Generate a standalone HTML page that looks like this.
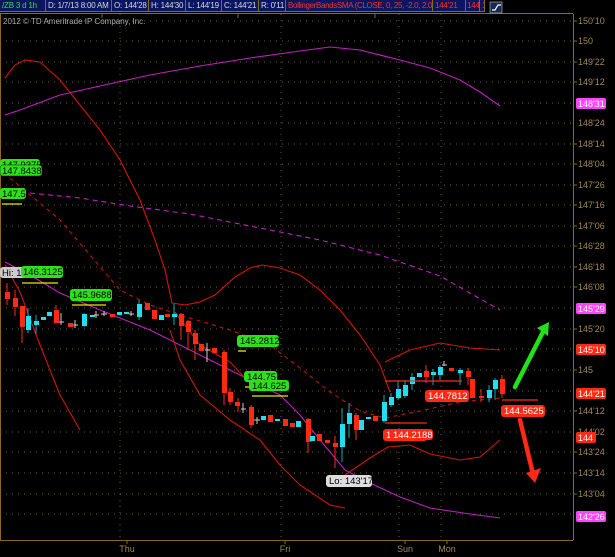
<!DOCTYPE html>
<html><head><meta charset="utf-8"><style>
html,body{margin:0;padding:0;background:#000;width:615px;height:557px;overflow:hidden;font-family:"Liberation Sans",sans-serif}
.hd{position:absolute;top:0;left:0;height:13px;width:615px;background:#000}
.c{position:absolute;top:0;height:12px;background:#0b1660;border-right:1px solid #8a6a18;border-bottom:1px solid #8a6a18;color:#d8d8d8;font-size:8px;letter-spacing:-0.2px;line-height:12px;white-space:nowrap;overflow:hidden;padding-left:2px;box-sizing:border-box}
</style></head><body>
<div class="hd">
<div class="c" style="left:0;width:46px;color:#2fe03a">/ZB 3 d 1h</div>
<div class="c" style="left:46px;width:66px">D: 1/7/13 8:00 AM</div>
<div class="c" style="left:112px;width:37px">O: 144'28</div>
<div class="c" style="left:149px;width:37px">H: 144'30</div>
<div class="c" style="left:186px;width:36px">L: 144'19</div>
<div class="c" style="left:222px;width:37px">C: 144'21</div>
<div class="c" style="left:259px;width:27px">R: 0'11</div>
<div class="c" style="left:286px;width:147px;color:#ff3020;letter-spacing:-0.35px">BollingerBandsSMA (CLOSE, 0, 25, -2.0, 2.0)</div>
<div class="c" style="left:433px;width:33px;color:#ff3020">144'21</div>
<div class="c" style="left:466px;width:14px;color:#ff3020;padding-left:1px">144</div>
<div class="c" style="left:480px;width:5px;color:#ff3020">1</div>
</div>
<svg width="615" height="557" style="position:absolute;top:0;left:0" font-family="Liberation Sans, sans-serif">
<line x1="0" y1="13.5" x2="573" y2="13.5" stroke="#8a6a18"/>
<rect x="490" y="2" width="12" height="11" fill="#1a2a50" stroke="#aaa" stroke-width="0.7"/>
<path d="M492 10 L495 10 L498 5 L501 5" stroke="#fff" fill="none" stroke-width="1.2"/>
<g stroke="#8a6a18"><line x1="102" y1="14" x2="102" y2="18"/><line x1="238" y1="14" x2="238" y2="18"/><line x1="375" y1="14" x2="375" y2="18"/></g>
<text x="3" y="24" fill="#b0b0b0" font-size="8">2012 © TD Ameritrade IP Company, Inc.</text>
<g stroke="#6a5a30" stroke-dasharray="1 5" stroke-width="1">
<line x1="0" y1="21" x2="573" y2="21"/><line x1="0" y1="41" x2="573" y2="41"/><line x1="0" y1="62" x2="573" y2="62"/><line x1="0" y1="82" x2="573" y2="82"/><line x1="0" y1="103" x2="573" y2="103"/><line x1="0" y1="123" x2="573" y2="123"/><line x1="0" y1="144" x2="573" y2="144"/><line x1="0" y1="164" x2="573" y2="164"/><line x1="0" y1="185" x2="573" y2="185"/><line x1="0" y1="205" x2="573" y2="205"/><line x1="0" y1="226" x2="573" y2="226"/><line x1="0" y1="246" x2="573" y2="246"/><line x1="0" y1="267" x2="573" y2="267"/><line x1="0" y1="287" x2="573" y2="287"/><line x1="0" y1="308" x2="573" y2="308"/><line x1="0" y1="329" x2="573" y2="329"/><line x1="0" y1="349" x2="573" y2="349"/><line x1="0" y1="370" x2="573" y2="370"/><line x1="0" y1="391" x2="573" y2="391"/><line x1="0" y1="411" x2="573" y2="411"/><line x1="0" y1="432" x2="573" y2="432"/><line x1="0" y1="452" x2="573" y2="452"/><line x1="0" y1="473" x2="573" y2="473"/><line x1="0" y1="494" x2="573" y2="494"/><line x1="0" y1="514" x2="573" y2="514"/>
<line x1="120" y1="14" x2="120" y2="540"/><line x1="281" y1="14" x2="281" y2="540"/><line x1="399" y1="14" x2="399" y2="540"/><line x1="441" y1="14" x2="441" y2="540"/>
</g>
<line x1="573.5" y1="14" x2="573.5" y2="540" stroke="#8a6a18"/>
<line x1="0" y1="540.5" x2="573" y2="540.5" stroke="#8a6a18"/>
<line x1="0.5" y1="14" x2="0.5" y2="540" stroke="#8a6a18"/>
<g stroke="#8a6a18"><line x1="127" y1="540" x2="127" y2="544"/><line x1="285" y1="540" x2="285" y2="544"/><line x1="405" y1="540" x2="405" y2="544"/><line x1="447" y1="540" x2="447" y2="544"/></g>
<g fill="#a08850" font-size="9" text-anchor="middle"><text x="127" y="552">Thu</text><text x="285" y="552">Fri</text><text x="405" y="552">Sun</text><text x="447" y="552">Mon</text></g>
<g fill="#a08850" font-size="9">
<g stroke="#8a6a18"><line x1="573" y1="21" x2="577" y2="21"/><line x1="573" y1="41" x2="577" y2="41"/><line x1="573" y1="62" x2="577" y2="62"/><line x1="573" y1="82" x2="577" y2="82"/><line x1="573" y1="144" x2="577" y2="144"/><line x1="573" y1="164" x2="577" y2="164"/><line x1="573" y1="185" x2="577" y2="185"/><line x1="573" y1="205" x2="577" y2="205"/><line x1="573" y1="226" x2="577" y2="226"/><line x1="573" y1="246" x2="577" y2="246"/><line x1="573" y1="267" x2="577" y2="267"/><line x1="573" y1="287" x2="577" y2="287"/><line x1="573" y1="329" x2="577" y2="329"/><line x1="573" y1="370" x2="577" y2="370"/><line x1="573" y1="411" x2="577" y2="411"/><line x1="573" y1="452" x2="577" y2="452"/><line x1="573" y1="473" x2="577" y2="473"/><line x1="573" y1="494" x2="577" y2="494"/></g>
<text x="578" y="24">150'10</text><text x="578" y="44">150</text><text x="578" y="65">149'22</text><text x="578" y="85">149'12</text><text x="578" y="126">148'24</text><text x="578" y="147">148'14</text><text x="578" y="167">148'04</text><text x="578" y="188">147'26</text><text x="578" y="208">147'16</text><text x="578" y="229">147'06</text><text x="578" y="249">146'28</text><text x="578" y="270">146'18</text><text x="578" y="290">146'08</text><text x="578" y="332">145'20</text><text x="578" y="373">145</text><text x="578" y="414">144'12</text><text x="578" y="435">144'02</text><text x="578" y="455">143'24</text><text x="578" y="476">143'14</text><text x="578" y="497">143'04</text>
</g>
<g font-size="9">
<rect x="576" y="98" width="30" height="11" rx="2" fill="#ff44ff"/><text x="578" y="107" fill="#fff">148'31</text>
<rect x="576" y="303" width="30" height="11" rx="2" fill="#ff44ff"/><text x="578" y="312" fill="#fff">145'29</text>
<rect x="576" y="344" width="30" height="11" rx="2" fill="#ff2a14"/><text x="578" y="353" fill="#fff">145'10</text>
<rect x="576" y="388" width="30" height="11" rx="2" fill="#ff2a14"/><text x="578" y="397" fill="#fff">144'21</text>
<rect x="576" y="432" width="20" height="11" rx="2" fill="#ff2a14"/><text x="578" y="441" fill="#fff">144</text>
<rect x="576" y="511" width="30" height="11" rx="2" fill="#ff44ff"/><text x="578" y="520" fill="#fff">142'26</text>
</g>
<g fill="none" stroke-width="1.1">
<polyline stroke="#c020c0" points="5,115 20,110 60,95 100,86 150,75 200,66 250,58 300,51 330,47 360,50 400,60 430,68 460,80 480,92 500,106"/>
<polyline stroke="#c020c0" points="5,262 30,275 60,293 100,310 150,330 200,355 250,380 280,395 300,415 320,440 345,470 370,483 400,497 430,508 470,514 500,518"/>
<polyline stroke="#c020c0" stroke-dasharray="5 4" points="30,193 80,198 130,206 190,214 250,226 320,240 380,255 440,276 500,310"/>
<polyline stroke="#d01808" points="5,78 15,65 25,60 40,62 60,80 80,105 100,130 120,160 140,200 155,240 165,270 172,303 185,305 200,302 215,295 235,277 250,268 262,265 280,268 300,275 320,290 340,310 360,335 380,365 390,392"/>
<polyline stroke="#d01808" points="5,265 20,292 40,345 60,395 80,430"/>
<polyline stroke="#d01808" points="170,330 180,360 200,395 230,420 260,440 280,465 300,485 330,505 345,508"/>
<polyline stroke="#d01808" points="345,475 370,458 388,447 410,445 430,454 460,460 480,457 500,440"/>
<polyline stroke="#d01808" points="385,362 410,350 440,343 470,348 500,350"/>
<polyline stroke="#d01808" points="175,312 200,345 230,362 245,378"/>
<polyline stroke="#c01808" stroke-dasharray="4 4" points="10,178 60,220 120,290 150,305 190,318 230,330 270,345 300,368 330,392 360,411 385,418 420,411 460,402 500,398"/>
</g>
<g>
<g stroke="#ff2a14"><line x1="7" y1="283" x2="7" y2="305"/><line x1="15" y1="290" x2="15" y2="316"/><line x1="22" y1="306" x2="22" y2="343"/><line x1="56" y1="305" x2="56" y2="323"/><line x1="181" y1="313" x2="181" y2="340"/><line x1="188" y1="320" x2="188" y2="350"/><line x1="195" y1="330" x2="195" y2="360"/><line x1="224" y1="350" x2="224" y2="405"/><line x1="230" y1="388" x2="230" y2="405"/><line x1="251" y1="405" x2="251" y2="428"/><line x1="308" y1="418" x2="308" y2="453"/><line x1="335" y1="436" x2="335" y2="468"/><line x1="356" y1="413" x2="356" y2="440"/><line x1="426" y1="365" x2="426" y2="383"/><line x1="468" y1="368" x2="468" y2="385"/><line x1="481" y1="389" x2="481" y2="402"/><line x1="502" y1="375" x2="502" y2="398"/><line x1="238" y1="398" x2="238" y2="412"/></g>
<g stroke="#10a8b0"><line x1="28" y1="308" x2="28" y2="333"/><line x1="36" y1="315" x2="36" y2="334"/><line x1="84" y1="313" x2="84" y2="327"/><line x1="139" y1="300" x2="139" y2="320"/><line x1="174" y1="304" x2="174" y2="325"/><line x1="342" y1="408" x2="342" y2="462"/><line x1="349" y1="403" x2="349" y2="438"/><line x1="384" y1="395" x2="384" y2="423"/><line x1="391" y1="393" x2="391" y2="407"/><line x1="398" y1="381" x2="398" y2="400"/><line x1="405" y1="380" x2="405" y2="398"/><line x1="412" y1="373" x2="412" y2="390"/><line x1="433" y1="369" x2="433" y2="385"/><line x1="440" y1="365" x2="440" y2="380"/><line x1="460" y1="368" x2="460" y2="385"/><line x1="489" y1="385" x2="489" y2="402"/><line x1="495" y1="378" x2="495" y2="400"/></g>
<g fill="#ff2a14">
<rect x="5" y="292" width="5" height="7"/><rect x="13" y="298" width="5" height="9"/><rect x="20" y="306" width="5" height="21"/><rect x="54" y="310" width="5" height="13"/><rect x="68" y="323" width="5" height="4"/><rect x="110" y="314" width="5" height="3"/><rect x="145" y="303" width="5" height="7"/><rect x="152" y="310" width="5" height="9"/><rect x="165" y="314" width="5" height="3"/><rect x="179" y="314" width="5" height="12"/><rect x="186" y="321" width="5" height="11"/><rect x="193" y="333" width="5" height="11"/><rect x="199" y="344" width="5" height="7"/><rect x="212" y="348" width="5" height="5"/><rect x="222" y="352" width="5" height="41"/><rect x="228" y="392" width="5" height="10"/><rect x="235" y="402" width="5" height="4"/><rect x="249" y="407" width="5" height="18"/><rect x="268" y="415" width="5" height="7"/><rect x="283" y="419" width="5" height="7"/><rect x="290" y="423" width="5" height="4"/><rect x="306" y="419" width="5" height="23"/><rect x="317" y="434" width="5" height="7"/><rect x="325" y="440" width="5" height="3"/><rect x="333" y="443" width="5" height="4"/><rect x="354" y="415" width="5" height="15"/><rect x="373" y="416" width="5" height="5"/><rect x="424" y="371" width="5" height="6"/><rect x="449" y="368" width="5" height="3"/><rect x="466" y="371" width="5" height="6"/><rect x="470" y="379" width="5" height="19"/><rect x="479" y="396" width="5" height="2"/><rect x="500" y="379" width="5" height="15"/>
</g>
<g fill="#20e0f0">
<rect x="26" y="316" width="5" height="14"/><rect x="34" y="321" width="5" height="4"/><rect x="41" y="317" width="5" height="3"/><rect x="47" y="312" width="5" height="4"/><rect x="82" y="314" width="5" height="12"/><rect x="90" y="315" width="5" height="2"/><rect x="117" y="312" width="5" height="3"/><rect x="124" y="312" width="5" height="2"/><rect x="137" y="304" width="5" height="13"/><rect x="159" y="315" width="5" height="5"/><rect x="172" y="314" width="5" height="3"/><rect x="261" y="416" width="5" height="4"/><rect x="275" y="419" width="5" height="2"/><rect x="296" y="421" width="5" height="6"/><rect x="310" y="436" width="5" height="5"/><rect x="340" y="424" width="5" height="23"/><rect x="347" y="413" width="5" height="11"/><rect x="359" y="420" width="5" height="10"/><rect x="366" y="417" width="5" height="2"/><rect x="382" y="402" width="5" height="19"/><rect x="389" y="397" width="5" height="8"/><rect x="396" y="389" width="5" height="9"/><rect x="403" y="385" width="5" height="11"/><rect x="410" y="377" width="5" height="7"/><rect x="417" y="373" width="5" height="4"/><rect x="431" y="372" width="5" height="3"/><rect x="438" y="367" width="5" height="8"/><rect x="458" y="370" width="5" height="3"/><rect x="487" y="390" width="5" height="8"/><rect x="493" y="380" width="5" height="9"/>
</g>
<g stroke="#ccc"><path d="M61 313V325M59 322H64M75 320V328M73 325H78M96 311V318M94 315H99M104 311V316M101 314H107M131 311V316M129 314H134M207 343V362M205 350H210M243 403V413M241 409H246M257 417V424M254 420H260M444 361V366M442 365H447"/></g>
</g>
<g stroke="#e6e600" stroke-width="1.3"><line x1="2" y1="204" x2="22" y2="204"/><line x1="22" y1="283" x2="58" y2="283"/><line x1="72" y1="305" x2="106" y2="305"/><line x1="238" y1="351" x2="246" y2="351"/><line x1="252" y1="396" x2="288" y2="396"/><line x1="245" y1="387" x2="250" y2="387"/></g>
<g stroke="#ff2a14" stroke-width="1.3"><line x1="385" y1="381" x2="462" y2="381"/><line x1="385" y1="423" x2="400" y2="423"/><line x1="391" y1="423" x2="427" y2="423"/><line x1="502" y1="400" x2="538" y2="400"/></g>
<g font-size="9.5" fill="#000">
<rect x="0" y="159" width="40" height="10" rx="3" fill="#2ee01c"/><text x="2" y="168">147.9375</text>
<rect x="0" y="165" width="42" height="11" rx="3" fill="#2ee01c" stroke="#111" stroke-width="0.5"/><text x="2" y="174">147.8438</text>
<rect x="0" y="188" width="26" height="11" rx="3" fill="#2ee01c"/><text x="2" y="197">147.5</text>
<rect x="0" y="267" width="34" height="11" rx="3" fill="#ccc"/><text x="2" y="276">Hi: 1</text>
<rect x="21" y="266" width="42" height="12" rx="3" fill="#2ee01c"/><text x="23" y="275">146.3125</text>
<rect x="70" y="289" width="42" height="12" rx="3" fill="#2ee01c"/><text x="72" y="298">145.9688</text>
<rect x="237" y="335" width="42" height="12" rx="3" fill="#2ee01c"/><text x="240" y="344">145.2812</text>
<rect x="244" y="371" width="33" height="11" rx="3" fill="#2ee01c"/><text x="247" y="380">144.75</text>
<rect x="249" y="380" width="40" height="11" rx="3" fill="#2ee01c"/><text x="252" y="389">144.625</text>
<rect x="326" y="475" width="46" height="12" rx="3" fill="#ddd"/><text x="329" y="484">Lo: 143'17</text>
</g>
<g font-size="9.5" fill="#fff">
<rect x="383" y="429" width="44" height="12" rx="3" fill="#ff2a14"/><text x="386" y="438">144.1562</text>
<rect x="390" y="429" width="43" height="11" rx="3" fill="#ff2a14"/><text x="393" y="438">144.2188</text>
<rect x="425" y="390" width="44" height="12" rx="3" fill="#ff2a14"/><text x="428" y="399">144.7812</text>
<rect x="501" y="405" width="44" height="12" rx="3" fill="#ff2a14"/><text x="504" y="414">144.5625</text>
</g>
<g stroke="#22e01a" stroke-width="4.5" stroke-linecap="round" fill="none"><line x1="515" y1="387" x2="543" y2="332"/></g>
<polygon points="537,328 549,322 548,336" fill="#22e01a"/>
<g stroke="#ff2a14" stroke-width="4.5" stroke-linecap="round"><line x1="520" y1="420" x2="533" y2="474"/></g>
<polygon points="526,473 541,468 535,483" fill="#ff2a14"/>
</svg>
</body></html>
